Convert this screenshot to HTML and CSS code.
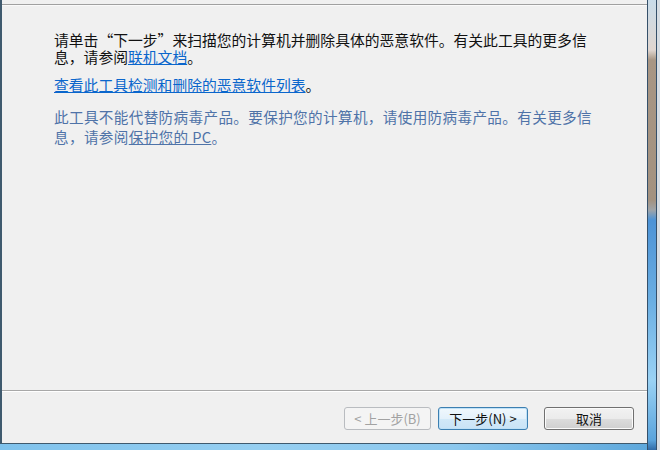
FILE: index.html
```html
<!DOCTYPE html>
<html lang="zh-CN">
<head>
<meta charset="utf-8">
<title>恶意软件删除工具</title>
<link rel="stylesheet" href="styles.css">
</head>
<body>
<div class="window">
  <div class="main">
    <div class="panel">
      <div class="head-rule"></div>
      <div class="content">
        <p class="intro">请单击“下一步”来扫描您的计算机并删除具体的恶意软件。有关此工具的更多信<br>息，请参阅<a class="link" href="#">联机文档</a>。</p>
        <p class="list"><a class="link" href="#">查看此工具检测和删除的恶意软件列表</a>。</p>
        <p class="note">此工具不能代替防病毒产品。要保护您的计算机，请使用防病毒产品。有关更多信<br>息，请参阅<a class="note-link" href="#">保护您的 PC</a>。</p>
      </div>
      <div class="footer">
        <button class="btn btn-back" disabled>&lt; 上一步(B)</button>
        <button class="btn btn-next">下一步(N) &gt;</button>
        <button class="btn btn-cancel">取消</button>
      </div>
    </div>
    <div class="bottom-frame"></div>
  </div>
  <div class="right-frame"></div>
</div>
</body>
</html>
```

FILE: styles.css
```css
html, body {
  margin: 0;
  padding: 0;
  background: #8fc9ee;
}

.window {
  display: flex;
  width: 660px;
  height: 450px;
  overflow: hidden;
}

.main {
  display: flex;
  flex-direction: column;
  width: 647px;
}

.panel {
  flex: 1;
  display: flex;
  flex-direction: column;
  background: #f0f0f0;
  border-left: 2px solid #3f5a6e;
  border-bottom: 1px solid #3f5a6e;
}

.head-rule {
  height: 4px;
  border-bottom: 1px solid #a0a0a0;
  box-shadow: 0 1px 0 #fafafa;
}

.content {
  flex: 1;
  padding: 26px 0 0 52px;
  font-family: "Noto Sans CJK SC", "Noto Sans", sans-serif;
}

.content p {
  margin: 0;
}

.intro {
  font-size: 14.8px;
  line-height: 17px;
  color: #111;
}

.list {
  margin-top: 11px !important;
  font-size: 14.8px;
  line-height: 17px;
  color: #111;
}

.link {
  color: #0a66cc;
  text-decoration: underline;
}

.note {
  margin-top: 14px !important;
  font-size: 14.6px;
  line-height: 20px;
  letter-spacing: 0.35px;
  color: #4f73a8;
}

.note-link {
  color: #4f73a8;
  text-decoration: underline;
}

.footer {
  border-top: 1px solid #a8a8a8;
  box-shadow: inset 0 1px 0 #ffffff;
  display: flex;
  justify-content: flex-end;
  align-items: flex-start;
  padding: 16px 13px 0 0;
  box-sizing: border-box;
  height: 53px;
}

.btn {
  height: 23px;
  padding: 0;
  border-radius: 3px;
  font-family: "Noto Sans CJK SC", "Noto Sans", sans-serif;
  font-size: 13px;
  line-height: 20px;
  box-sizing: border-box;
}

.btn-back {
  width: 87px;
  color: #a2a2a2;
  border: 1px solid #b9bcc0;
  background: #f4f4f4;
}

.btn-next {
  width: 90px;
  margin-left: 7px;
  color: #111;
  border: 1px solid #3c7fb1;
  background: linear-gradient(#f0f8fd 0%, #e4f1fb 50%, #d2e9f8 51%, #c9e3f6 100%);
  box-shadow: inset 0 0 0 1px #bfe1f7;
}

.btn-cancel {
  width: 90px;
  margin-left: 16px;
  color: #111;
  border: 1px solid #707070;
  background: linear-gradient(#f2f2f2 0%, #ebebeb 50%, #dddddd 51%, #cfcfcf 100%);
  box-shadow: inset 0 0 0 1px #fbfbfb;
}

.bottom-frame {
  height: 6px;
  background: linear-gradient(90deg, #7fc2ec 0%, #96cff1 40%, #8cc8ee 70%, #5ea8dc 100%);
}

.right-frame {
  width: 13px;
  display: flex;
  background:
    linear-gradient(90deg, #35506a 0px, #35506a 1px, transparent 1px, transparent 9px, #35506a 9px, #35506a 10px, #d7dde3 10px),
    linear-gradient(180deg, #c9dcea 0px, #e0d6d0 50px, #a89684 60px, #a39280 200px, #9fa4a8 210px, #4d93d6 220px, #6aaee2 300px, #9ad2f4 380px, #5aa4dc 440px, #2f6aa6 450px);
}
```
